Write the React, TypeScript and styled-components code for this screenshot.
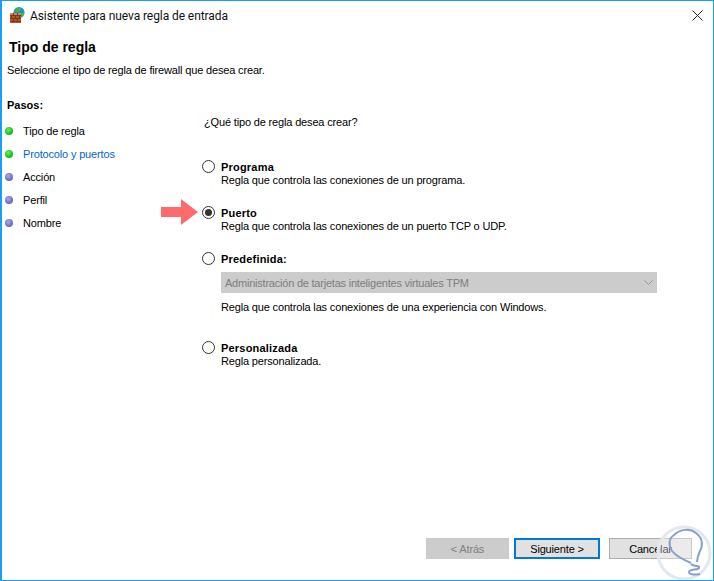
import React from 'react';
import styled, { createGlobalStyle } from 'styled-components';

const GlobalStyle = createGlobalStyle`
  html, body {
    margin: 0;
    padding: 0;
    background: #fff;
  }
  body {
    font-family: "Liberation Sans", Arial, sans-serif;
    font-size: 11px;
    letter-spacing: -0.16px;
    color: #000;
  }
`;

const Window = styled.div`
  position: relative;
  box-sizing: border-box;
  width: 714px;
  height: 581px;
  display: flex;
  flex-direction: column;
  overflow: hidden;
  background: #fff;
  border: 1px solid #18a0f0;
  border-left-width: 2px;
`;

const TitleBar = styled.div`
  display: flex;
  align-items: center;
  height: 30px;
  padding: 0 10px 0 8px;
  flex-shrink: 0;
`;

const TitleIcon = styled.svg`
  margin-bottom: 2px;
`;

const TitleText = styled.span`
  margin-left: 4px;
  flex: 1;
  font-family: Roboto, sans-serif;
  font-size: 12px;
  letter-spacing: -0.08px;
  color: #111;
`;

const CloseIcon = styled.svg`
  margin-bottom: 2px;
`;

const Header = styled.header`
  padding: 7px 0 0 5px;
  height: 48px;
  flex-shrink: 0;
`;

const Heading = styled.h1`
  margin: 0 0 6px 2px;
  font-size: 14px;
  line-height: 18px;
  font-weight: 700;
  letter-spacing: 0;
`;

const Description = styled.p`
  margin: 0;
  line-height: 17px;
`;

const Body = styled.div`
  flex: 1;
  display: grid;
  grid-template-columns: 189px 1fr;
  min-height: 0;
`;

const StepsPane = styled.nav`
  padding: 11px 0 0 5px;
`;

const StepsTitle = styled.div`
  font-weight: 700;
  line-height: 17px;
  margin-bottom: 5px;
  letter-spacing: 0;
`;

const StepList = styled.ul`
  list-style: none;
  margin: 0;
  padding: 0;
`;

const StepItem = styled.li<{ $active?: boolean }>`
  display: flex;
  align-items: center;
  height: 23px;
  gap: 10px;
  color: ${(p) => (p.$active ? '#0066cc' : '#000')};
`;

const StepDot = styled.span<{ $done?: boolean }>`
  width: 8px;
  height: 8px;
  margin-left: -2px;
  border-radius: 50%;
  background: ${(p) =>
    p.$done
      ? 'radial-gradient(circle at 40% 35%, #66ee66, #10c010 65%, #0a9a0a)'
      : 'radial-gradient(circle at 40% 35%, #a8a8ee, #6a6ac8 65%, #5555aa)'};
`;

const MainPane = styled.main`
  padding: 28px 56px 0 11px;
`;

const Question = styled.div`
  margin: 0 0 28px 2px;
  line-height: 17px;
`;

const OptionBlock = styled.div<{ $gap: number }>`
  margin-bottom: ${(p) => p.$gap}px;
`;

const OptionRow = styled.div`
  position: relative;
  display: flex;
  align-items: center;
  height: 15px;
  gap: 6px;
`;

const Radio = styled.span<{ $checked?: boolean }>`
  position: relative;
  box-sizing: border-box;
  width: 13px;
  height: 13px;
  border: 1px solid #333;
  border-radius: 50%;
  background: #fff;
  flex-shrink: 0;
  &::after {
    content: '';
    display: ${(p) => (p.$checked ? 'block' : 'none')};
    position: absolute;
    inset: 2px;
    border-radius: 50%;
    background: #333;
  }
`;

const OptionLabel = styled.span`
  font-weight: 700;
  letter-spacing: 0.2px;
`;

const OptionHint = styled.div`
  margin: -1px 0 0 19px;
  line-height: 15px;
`;

const DisabledSelect = styled.div`
  display: flex;
  align-items: center;
  justify-content: space-between;
  box-sizing: border-box;
  height: 21px;
  width: 436px;
  margin: 6px 0 8px 19px;
  padding: 0 4px;
  background: #cccccc;
  color: #7d7d7d;
  letter-spacing: -0.22px;
`;

const PointerArrow = styled.svg`
  position: absolute;
  left: -41px;
  top: -6px;
`;

const Footer = styled.footer`
  display: flex;
  justify-content: flex-end;
  align-items: center;
  height: 21px;
  flex-shrink: 0;
  padding: 0 21px 21px 0;
  gap: 5px;
`;

const WizardButton = styled.button<{ $primary?: boolean }>`
  box-sizing: border-box;
  height: 21px;
  width: ${(p) => (p.$primary ? '86px' : '83px')};
  margin-right: ${(p) => (p.$primary ? '4px' : '0')};
  padding: 0;
  font-family: inherit;
  font-size: 11px;
  letter-spacing: inherit;
  color: #000;
  background: #e1e1e1;
  border: ${(p) => (p.$primary ? '2px solid #0078d7' : '1px solid #adadad')};
  &:disabled {
    background: #cccccc;
    border-color: #cccccc;
    color: #808080;
  }
`;

const Watermark = styled.svg`
  position: absolute;
  right: 1px;
  bottom: -1px;
  pointer-events: none;
`;

const FirewallIcon = () => (
  <TitleIcon width="16" height="16" viewBox="0 0 16 16">
    <circle cx="9" cy="5.500" r="5.500" fill="#1f8fd6" />
    <path d="M5 3c1.500-2 4-2.500 5.500-1.500S9 5 7 5 4.500 4 5 3z" fill="#3fb54a" />
    <path d="M11 6c1-.5 2.500-.7 3.500-.3-.2 2-1 3.300-2.500 4z" fill="#46b84f" />
    <rect x="0" y="6" width="11" height="10" fill="#b5562a" />
    <rect x="0" y="6" width="11" height="2" fill="#d8893f" />
    <path
      d="M0 8.500h11M0 11.500h11M0 14.500h11M3.500 6v2.500M7.500 6v2.500M1.500 8.500v3M5.500 8.500v3M9.500 8.500v3M3.500 11.500v3M7.500 11.500v3"
      stroke="#7a3a1a"
      strokeWidth="1"
      fill="none"
    />
  </TitleIcon>
);

const steps = [
  { label: 'Tipo de regla', done: true },
  { label: 'Protocolo y puertos', done: true, active: true },
  { label: 'Acción' },
  { label: 'Perfil' },
  { label: 'Nombre' },
];

const App: React.FC = () => {
  return (
    <Window>
      <GlobalStyle />
      <TitleBar>
        <FirewallIcon />
        <TitleText>Asistente para nueva regla de entrada</TitleText>
        <CloseIcon width="11" height="11" viewBox="0 0 11 11">
          <path d="M.5.5l10 10M10.500.5l-10 10" stroke="#222" strokeWidth="1" fill="none" />
        </CloseIcon>
      </TitleBar>
      <Header>
        <Heading>Tipo de regla</Heading>
        <Description>Seleccione el tipo de regla de firewall que desea crear.</Description>
      </Header>
      <Body>
        <StepsPane>
          <StepsTitle>Pasos:</StepsTitle>
          <StepList>
            {steps.map((step) => (
              <StepItem key={step.label} $active={step.active}>
                <StepDot $done={step.done} />
                {step.label}
              </StepItem>
            ))}
          </StepList>
        </StepsPane>
        <MainPane>
          <Question>¿Qué tipo de regla desea crear?</Question>
          <OptionBlock $gap={17}>
            <OptionRow>
              <Radio />
              <OptionLabel>Programa</OptionLabel>
            </OptionRow>
            <OptionHint>Regla que controla las conexiones de un programa.</OptionHint>
          </OptionBlock>
          <OptionBlock $gap={17}>
            <OptionRow>
              <PointerArrow width="37" height="26" viewBox="0 0 37 26">
                <path d="M0 8h20V0l17 13-17 13v-8H0z" fill="#ff6b6b" />
              </PointerArrow>
              <Radio $checked />
              <OptionLabel>Puerto</OptionLabel>
            </OptionRow>
            <OptionHint>Regla que controla las conexiones de un puerto TCP o UDP.</OptionHint>
          </OptionBlock>
          <OptionBlock $gap={25}>
            <OptionRow>
              <Radio />
              <OptionLabel>Predefinida:</OptionLabel>
            </OptionRow>
            <DisabledSelect>
              Administración de tarjetas inteligentes virtuales TPM
              <svg width="9" height="5" viewBox="0 0 9 5">
                <path d="M.5.5l4 4 4-4" stroke="#999" strokeWidth="1" fill="none" />
              </svg>
            </DisabledSelect>
            <OptionHint>Regla que controla las conexiones de una experiencia con Windows.</OptionHint>
          </OptionBlock>
          <OptionBlock $gap={0}>
            <OptionRow>
              <Radio />
              <OptionLabel>Personalizada</OptionLabel>
            </OptionRow>
            <OptionHint>Regla personalizada.</OptionHint>
          </OptionBlock>
        </MainPane>
      </Body>
      <Footer>
        <WizardButton disabled>&lt; Atrás</WizardButton>
        <WizardButton $primary>Siguiente &gt;</WizardButton>
        <WizardButton>Cancelar</WizardButton>
      </Footer>
      <Watermark width="56" height="56" viewBox="0 0 56 56">
        <circle cx="28" cy="28" r="26" fill="#ffffff" fillOpacity="0.35" stroke="#e3e8ef" strokeWidth="3" />
        <path
          d="M35 38C28 35 20 31 16 26 12 20 13 13 18 10 24 4 34 3 40 8 47 13 47 21 44 26 42 30 41 33 41 37"
          fill="none"
          stroke="#86a0cc"
          strokeWidth="2"
        />
        <path d="M35 39C38 42 44 40 43 43 42 45 33 44 33 47 33 50 40 50 44 49" fill="none" stroke="#86a0cc" strokeWidth="2" />
      </Watermark>
    </Window>
  );
};

export default App;
